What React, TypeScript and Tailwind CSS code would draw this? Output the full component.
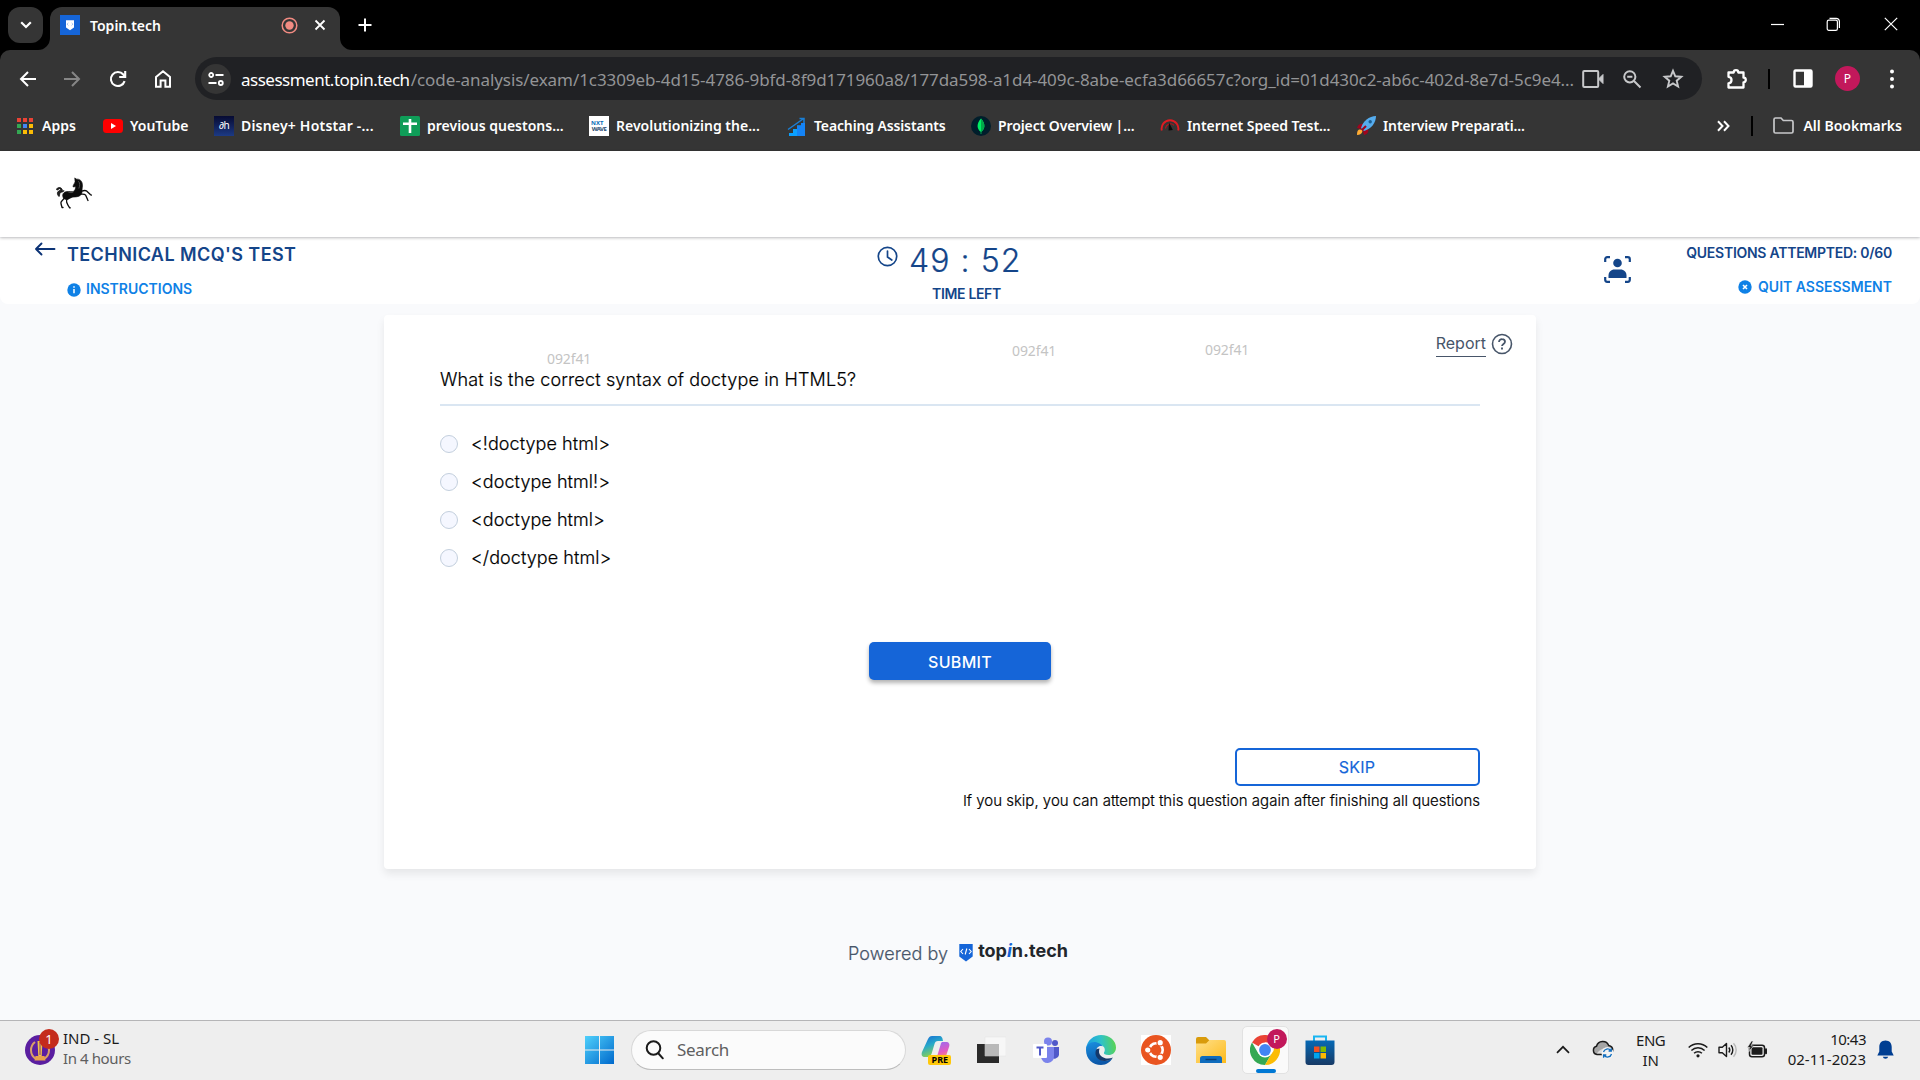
import type { ReactNode } from "react";

/* ---------- Browser chrome ---------- */

function TabStrip() {
  return (
    <div className="flex h-[50px] items-end bg-black">
      <div className="mb-[7px] ml-[8px] flex h-[36px] w-[35px] items-center justify-center rounded-[12px] bg-[#353535]">
        <svg width="12" height="8" viewBox="0 0 12 8" fill="none" stroke="#fff" strokeWidth="2.2">
          <path d="M1.2 1.2 6 6l4.8-4.8" />
        </svg>
      </div>
      <div className="relative ml-[7px] flex h-[43px] w-[290px] items-center rounded-t-[12px] bg-[#353535] pb-[7px] pl-[10px]">
        <svg className="absolute bottom-0 -left-[12px]" width="12" height="12" viewBox="0 0 12 12">
          <path d="M12 0v12H0A12 12 0 0 0 12 0Z" fill="#353535" />
        </svg>
        <svg className="absolute -right-[12px] bottom-0" width="12" height="12" viewBox="0 0 12 12">
          <path d="M0 0v12h12A12 12 0 0 1 0 0Z" fill="#353535" />
        </svg>
        <svg width="20" height="20" viewBox="0 0 20 20">
          <rect width="20" height="20" fill="#1565d8" />
          <path d="M6 5.200h8v7.300l-4 2.700-4-2.700Z" fill="#fff" />
          <path d="m8.300 8-1.200 1.200 1.200 1.200m3.400-2.400 1.200 1.200-1.200 1.200" stroke="#7fa9e8" strokeWidth=".8" fill="none" />
        </svg>
        <span className="ml-[10px] w-[191px] text-[14px] font-semibold whitespace-nowrap text-white">Topin.tech</span>
        <svg width="17" height="17" viewBox="0 0 17 17">
          <circle cx="8.500" cy="8.500" r="7.300" fill="none" stroke="#f28b82" strokeWidth="1.500" />
          <circle cx="8.500" cy="8.500" r="4.200" fill="#f28b82" />
        </svg>
        <svg className="ml-[16px]" width="12" height="12" viewBox="0 0 12 12" stroke="#fff" strokeWidth="1.800">
          <path d="m1.500 1.500 9 9m0-9-9 9" />
        </svg>
      </div>
      <svg className="mb-[18px] ml-[18px]" width="14" height="14" viewBox="0 0 14 14" stroke="#fff" strokeWidth="2">
        <path d="M7 .5v13M.5 7h13" />
      </svg>
      <div className="mb-[16px] ml-auto flex items-center pr-[22px]">
        <svg width="15" height="20" viewBox="0 0 15 20" stroke="#fff" strokeWidth="1.200">
          <path d="M1 10.500h13" />
        </svg>
        <svg className="ml-[41px]" width="15" height="15" viewBox="0 0 15 15" fill="none" stroke="#fff" strokeWidth="1.200">
          <rect x="1.200" y="3.200" width="10.200" height="10.200" rx="1.600" />
          <path d="M3.500 1.300h6.700a3.200 3.200 0 0 1 3.200 3.200v6.600" />
        </svg>
        <svg className="ml-[43px]" width="14" height="14" viewBox="0 0 14 14" stroke="#fff" strokeWidth="1.200">
          <path d="m.8.8 12.400 12.400m0-12.400L.8 13.200" />
        </svg>
      </div>
    </div>
  );
}

function Toolbar() {
  return (
    <div className="bg-black">
      <div className="flex h-[57px] items-center rounded-t-[10px] bg-[#353535]">
        <div className="flex w-[195px] items-center pl-[17px]">
          <svg width="22" height="22" viewBox="0 0 22 22" fill="none" stroke="#fff" strokeWidth="2">
            <path d="M19 11H4.500M11 4l-7 7 7 7" />
          </svg>
          <svg className="ml-[22px]" width="22" height="22" viewBox="0 0 22 22" fill="none" stroke="#868686" strokeWidth="2">
            <path d="M3 11h14.500M11 4l7 7-7 7" />
          </svg>
          <svg className="ml-[24px]" width="22" height="22" viewBox="0 0 22 22" fill="none" stroke="#fff" strokeWidth="2.100">
            <path d="M17.600 13.100A7 7 0 1 1 16.300 6.500l2 2.300" />
            <path d="M18.200 3v6h-6" />
          </svg>
          <svg className="ml-[23px]" width="22" height="22" viewBox="0 0 22 22" fill="none" stroke="#fff" strokeWidth="2">
            <path d="M4 9 11 3.300 18 9v9.800h-4.600v-6.300H8.600v6.300H4Z" />
          </svg>
        </div>
        <div className="flex h-[43px] w-[1507px] items-center rounded-full bg-[#202124] pl-[6px]">
          <div className="flex h-[30px] w-[30px] items-center justify-center rounded-full bg-[#353535]">
            <svg width="16" height="14" viewBox="0 0 16 14" fill="none" stroke="#fff" strokeWidth="1.800">
              <circle cx="3.200" cy="3" r="2" />
              <path d="M7.500 3H15.500M.5 11h8" />
              <circle cx="12.800" cy="11" r="2" />
            </svg>
          </div>
          <div className="mt-[2px] ml-[10px] flex w-[1333px] text-[17px] whitespace-nowrap">
            <span className="w-[170px] tracking-[-0.5px] text-white">assessment.topin.tech</span>
            <span className="tracking-[-0.075px] text-[#939496]">
              /code-analysis/exam/1c3309eb-4d15-4786-9bfd-8f9d171960a8/177da598-a1d4-409c-8abe-ecfa3d66657c?org_id=01d430c2-ab6c-402d-8e7d-5c9e4...
            </span>
          </div>
          <svg className="ml-[8px]" width="22" height="20" viewBox="0 0 22 20" fill="none" stroke="#c7c8ca" strokeWidth="2">
            <rect x="1.200" y="2" width="15" height="16" rx="1" />
            <path d="m16.500 10 4.500-4.500v9Z" fill="#c7c8ca" strokeWidth="1" />
          </svg>
          <svg className="ml-[18px]" width="20" height="20" viewBox="0 0 20 20" fill="none" stroke="#c7c8ca" strokeWidth="2">
            <circle cx="7.800" cy="7.800" r="5.600" />
            <path d="m12 12 6.500 6.500M5.200 7.800h5.200" />
          </svg>
          <svg className="ml-[20px]" width="22" height="22" viewBox="0 0 22 22" fill="none" stroke="#c7c8ca" strokeWidth="1.900">
            <path d="m11 2.800 2.300 5.500 6 .5-4.600 3.900 1.400 5.800L11 15.400l-5.100 3.100 1.400-5.800-4.600-3.900 6-.5Z" />
          </svg>
        </div>
        <svg className="ml-[23px]" width="24" height="24" viewBox="0 0 24 24" fill="none" stroke="#fff" strokeWidth="2.300">
          <path d="M3.500 5.500h5.200a2.300 2.300 0 0 1 4.600 0h5.200v5.200a2.300 2.300 0 0 1 0 4.600v5.200h-15v-4.200c2-.2 3-1.500 3-3.300s-1-3-3-3.200Z" strokeLinejoin="round" />
        </svg>
        <div className="ml-[19px] h-[20px] w-[2px] bg-black" />
        <svg className="ml-[23px]" width="20" height="19" viewBox="0 0 20 19">
          <rect x="1.500" y="1.500" width="17" height="16" rx="1" fill="none" stroke="#fff" strokeWidth="2.400" />
          <path d="M11 1.500h7.500v16H11Z" fill="#fff" />
        </svg>
        <div className="ml-[22px] flex h-[25px] w-[25px] items-center justify-center rounded-full bg-[#c2185b] text-[12px] text-white">P</div>
        <svg className="ml-[29px]" width="6" height="20" viewBox="0 0 6 20" fill="#fff">
          <circle cx="3" cy="2.500" r="2" />
          <circle cx="3" cy="10" r="2" />
          <circle cx="3" cy="17.500" r="2" />
        </svg>
      </div>
    </div>
  );
}

function Bookmark({ width, tracking, icon, label }: { width: string; tracking?: string; icon: ReactNode; label: string }) {
  return (
    <div className={`flex shrink-0 items-center gap-[7px] whitespace-nowrap ${width}`}>
      <div className="flex h-5 w-5 shrink-0 items-center justify-center">{icon}</div>
      <span className={tracking}>{label}</span>
    </div>
  );
}

const APP_DOTS = ["#ea4335", "#ea4335", "#ea4335", "#34a853", "#4285f4", "#fbbc05", "#34a853", "#fbbc05", "#fbbc05"];

function BookmarksBar() {
  return (
    <div className="flex h-[44px] items-center bg-[#353535] pb-[7px] pl-[15px] text-[14px] font-semibold text-white">
      <Bookmark
        width="w-[88px]"
        label="Apps"
        icon={
          <div className="grid grid-cols-3 gap-[2px]">
            {APP_DOTS.map((c, i) => (
              <i key={i} className="h-[4px] w-[4px]" style={{ background: c }} />
            ))}
          </div>
        }
      />
      <Bookmark
        width="w-[111px]"
        label="YouTube"
        icon={
          <svg width="20" height="20" viewBox="0 0 20 20">
            <rect x="0" y="3" width="20" height="14" rx="3.500" fill="#f00" />
            <path d="m8 7 5 3-5 3Z" fill="#fff" />
          </svg>
        }
      />
      <Bookmark
        width="w-[186px]"
        tracking="tracking-[0.2px]"
        label="Disney+ Hotstar -..."
        icon={
          <div className="flex h-5 w-5 items-center justify-center bg-linear-to-b from-[#070b33] to-[#1c3a85] text-[10px] font-normal tracking-[-0.5px]">
            ∂h
          </div>
        }
      />
      <Bookmark
        width="w-[189px]"
        label="previous questons..."
        icon={
          <svg width="20" height="20" viewBox="0 0 20 20">
            <rect width="20" height="20" rx="1.500" fill="#0f9d58" />
            <path d="M10 3v14M3 7.800h14" stroke="#fff" strokeWidth="2.600" />
          </svg>
        }
      />
      <Bookmark
        width="w-[198px]"
        label="Revolutionizing the..."
        icon={
          <div className="flex h-5 w-5 flex-col items-center justify-center bg-white text-[6px] leading-[6px] font-bold">
            <span className="self-start pl-[2px] text-[#0b6fb8]">NXT</span>
            <span className="tracking-[-0.5px] text-[#274b70]">WAVE</span>
          </div>
        }
      />
      <Bookmark
        width="w-[184px]"
        tracking="tracking-[-0.13px]"
        label="Teaching Assistants"
        icon={
          <svg width="20" height="20" viewBox="0 0 20 20">
            <path d="M2 20v-3h4v-4h4V9.500h4V7h4v13Z" fill="#0aa0ff" />
            <path d="M10 20V9.500h4V7h4v13Z" fill="#1483f5" />
            <path d="M1 13.500 16 3M12.500 2.500H17V7" fill="none" stroke="#1a7fd6" strokeWidth="1.500" />
          </svg>
        }
      />
      <Bookmark
        width="w-[189px]"
        tracking="tracking-[-0.1px]"
        label="Project Overview |..."
        icon={
          <svg width="20" height="20" viewBox="0 0 20 20">
            <circle cx="10" cy="10" r="10" fill="#001e2b" />
            <path d="M10 2.500c5 5.500 4 10.500.3 13.300V18h-.6v-2.200C6 13 5 8 10 2.500Z" fill="#00ed64" />
            <path d="M10 2.500c5 5.500 4 10.500.3 13.300H10Z" fill="#00a84a" />
          </svg>
        }
      />
      <Bookmark
        width="w-[196px]"
        tracking="tracking-[-0.08px]"
        label="Internet Speed Test..."
        icon={
          <svg width="20" height="20" viewBox="0 0 20 20" fill="none">
            <path d="M1.800 14.500a8.400 8.400 0 1 1 16.400 0" stroke="#e01b22" strokeWidth="1.900" />
            <path d="M5.500 12.500A5 5 0 0 1 14 9.300" stroke="#b5151b" strokeWidth="1.100" />
            <path d="m8.500 14.500.5-8 3.800 7.500Z" fill="#0a0a0a" />
          </svg>
        }
      />
      <Bookmark
        width="w-[180px]"
        tracking="tracking-[-0.08px]"
        label="Interview Preparati..."
        icon={
          <svg width="20" height="20" viewBox="0 0 20 20">
            <path d="M1 12c1-4 4-5 7-4l-3 5Z" fill="#a0041e" />
            <path d="M8 19c4-1 5-4 4-7l-5 3Z" fill="#a0041e" />
            <path d="M20 0c-7 0-13 5-15 12l3 3C15 13 20 7 20 0Z" fill="#55acee" />
            <path d="m4 16 6-6" stroke="#a0041e" strokeWidth="2.200" />
            <path d="M1 19c0-4 1-5.500 3-5.500s3 1.500 2 3S4 19 1 19Z" fill="#ffac33" />
            <circle cx="14.200" cy="5.800" r="1.700" fill="#1c5f94" />
          </svg>
        }
      />
      <svg className="ml-auto" width="13" height="12" viewBox="0 0 13 12" fill="none" stroke="#fff" strokeWidth="2">
        <path d="m1 1.300 4.500 4.700L1 10.700M7 1.300l4.500 4.700L7 10.700" />
      </svg>
      <div className="ml-[21px] h-[20px] w-[2px] bg-black" />
      <svg className="ml-[20px]" width="21" height="17" viewBox="0 0 21 17" fill="none" stroke="#c7c8ca" strokeWidth="1.700">
        <path d="M1 2.500A1.500 1.500 0 0 1 2.500 1H8l2.300 2.500h8.200A1.500 1.500 0 0 1 20 5v9.500a1.500 1.500 0 0 1-1.500 1.500h-16A1.500 1.500 0 0 1 1 14.500Z" />
      </svg>
      <span className="mr-[18px] ml-[9px] whitespace-nowrap">All Bookmarks</span>
    </div>
  );
}

/* ---------- Assessment page ---------- */

function HorseLogo() {
  return (
    <svg width="38" height="33" viewBox="165 79 114 98" fill="none" stroke="#0c0c0c" strokeLinecap="round" strokeLinejoin="round">
      <path
        d="M225 82l5 3c10-1 16 6 17 15 1 8-1 13-1 18 1 8-2 15-9 18-8 3-14 2-20 3-5 1-9 5-14 7-6 1-12-2-14-7-3-8 1-14 8-16 9-2 19 1 25-2 4-4 5-9 5-14-3 0-4 2-8 1 0-5 4-9 6-14Z"
        fill="#0c0c0c"
        strokeWidth="2"
      />
      <path d="M190 122c-5 3-8 1-10 5-2 5-1 9-3 10-4-4-6-9-4-13 2-5 8-4 9-8 0-4-5-3-8 1-6 2-5-3-2-5 4-3 12-2 14 3 1 3 2 5 6 5" strokeWidth="2.500" fill="#222" />
      <path d="M193 141c-2 6-8 8-10 13-1 6 2 10 3 16h3M203 142c-3 4-5 7-3 12 2 6 5 11 9 17h2" strokeWidth="4" />
      <path d="M242 122c6-2 12-5 17-2l12 11 3 2M240 130c7 0 13-2 17 3l6 14 1 2" strokeWidth="4" />
      <path d="M236 92c4 4 4 12 1 20M206 124c5 2 9 2 13 0" stroke="#777" strokeWidth="1.800" />
    </svg>
  );
}

function ExamHeader() {
  return (
    <div className="flex h-[66px] shrink-0 items-start justify-between rounded-b-[8px] bg-white text-[#144589]">
      <div className="flex w-[500px] pl-[34px]">
        <svg className="mt-[4px]" width="22" height="14" viewBox="0 0 22 14" fill="none" stroke="#0b3275" strokeWidth="1.900" strokeLinecap="round" strokeLinejoin="round">
          <path d="M20.500 7H2M7.500 1.500 2 7l5.500 5.500" />
        </svg>
        <div className="ml-[11px]">
          <h1 className="mt-[5px] text-[18px] leading-[24px] font-semibold tracking-[0.42px]">TECHNICAL MCQ'S TEST</h1>
          <div className="mt-[12px] flex items-center text-[14px] leading-[20px] font-semibold text-[#0f81e6]">
            <svg className="mt-px" width="14" height="14" viewBox="0 0 14 14">
              <circle cx="7" cy="7" r="6.700" fill="#0f81e6" />
              <path d="M7 6v4.300M7 3.200v1.500" stroke="#fff" strokeWidth="1.500" />
            </svg>
            <span className="ml-[5px]">INSTRUCTIONS</span>
          </div>
        </div>
      </div>
      <div className="w-[164px]">
        <div className="flex h-[44px] items-center">
          <svg className="mb-[8px] -ml-px" width="21" height="21" viewBox="0 0 21 21" fill="none" stroke="#144589" strokeWidth="1.700" strokeLinecap="round">
            <circle cx="10.500" cy="10.500" r="9.200" />
            <path d="M10.500 5v6l4.300 3" />
          </svg>
          <span className="mt-[2px] ml-[11px] text-[32px] leading-[44px] font-light tracking-[1.05px] whitespace-nowrap [-webkit-text-stroke:0.2px_#144589]">49 : 52</span>
        </div>
        <div className="pl-[54px] text-[14px] leading-[24px] font-semibold tracking-[-0.33px]">TIME LEFT</div>
      </div>
      <div className="flex w-[500px] justify-end pr-[28px]">
        <svg className="mt-[18px] mr-[55px]" width="27" height="27" viewBox="0 0 27 27">
          <path d="M1.200 6V3.200a2 2 0 0 1 2-2H6m15 0h2.800a2 2 0 0 1 2 2V6m0 15v2.800a2 2 0 0 1-2 2H21m-15 0H3.200a2 2 0 0 1-2-2V21" fill="none" stroke="#144589" strokeWidth="2.200" />
          <circle cx="13.500" cy="7" r="4.300" fill="#144589" />
          <path d="M4.500 22v-2.500c0-3.500 2.500-6 6-6h6c3.500 0 6 2.500 6 6V22Z" fill="#144589" />
        </svg>
        <div className="flex flex-col items-end text-[14px] leading-[20px] font-semibold whitespace-nowrap">
          <span className="mt-[5px] tracking-[-0.26px]">QUESTIONS ATTEMPTED: 0/60</span>
          <span className="mt-[14px] flex items-center text-[#0f81e6]">
            <svg className="mr-[6px]" width="14" height="14" viewBox="0 0 14 14">
              <circle cx="7" cy="7" r="6.700" fill="#0f81e6" />
              <path d="m5 5 4 4m0-4L5 9" stroke="#fff" strokeWidth="1.600" />
            </svg>
            QUIT ASSESSMENT
          </span>
        </div>
      </div>
    </div>
  );
}

const OPTIONS = ["<!doctype html>", "<doctype html!>", "<doctype html>", "</doctype html>"];

function QuestionCard() {
  return (
    <main className="relative mx-auto mt-[11px] h-[554px] w-[1152px] shrink-0 rounded-[4px] bg-white px-[56px] shadow-[0_5px_9px_rgba(0,0,0,0.08)]">
      <span className="absolute top-[34px] left-[163px] font-[Noto_Sans,sans-serif] text-[14px] leading-[20px] tracking-[-0.1px] text-[#c4c4c4]">092f41</span>
      <span className="absolute top-[26px] left-[628px] font-[Noto_Sans,sans-serif] text-[14px] leading-[20px] tracking-[-0.1px] text-[#c4c4c4]">092f41</span>
      <span className="absolute top-[25px] left-[821px] font-[Noto_Sans,sans-serif] text-[14px] leading-[20px] tracking-[-0.1px] text-[#c4c4c4]">092f41</span>
      <div className="-mr-[33px] flex h-[48px] items-start justify-end pt-[16px] text-[#475569]">
        <span className="border-b border-[#475569] pb-px text-[16px] leading-[24px]">Report</span>
        <svg className="mt-[2px] ml-[5px]" width="22" height="22" viewBox="0 0 22 22" fill="none" stroke="#475569" strokeWidth="1.600">
          <circle cx="11" cy="11" r="9.500" />
          <path d="M8 9a3 3 0 0 1 3.100-2.900C12.900 6.100 14 7.200 14 8.700c0 2.100-3 2.300-3 4.300" strokeWidth="1.800" />
          <path d="M11 14.500v1.900" strokeWidth="1.900" />
        </svg>
      </div>
      <h2 className="h-[43px] border-b-2 border-[#dae6f2] pt-[4px] text-[18px] leading-[26px] font-light tracking-[0.155px] text-black [-webkit-text-stroke:0.2px_#000]">
        What is the correct syntax of doctype in HTML5?
      </h2>
      <div className="mt-[19px]">
        {OPTIONS.map((o) => (
          <label key={o} className="flex h-[38px] items-center">
            <span className="h-[18px] w-[18px] rounded-full border border-[#c3cfdd] bg-[#f5f7ff]" />
            <span className="mb-[2px] ml-[13px] text-[18px] font-light tracking-[0.06px] text-black [-webkit-text-stroke:0.2px_#000]">{o}</span>
          </label>
        ))}
      </div>
      <button className="mx-auto mt-[65px] block h-[38px] w-[182px] rounded-[5px] bg-[#1565d8] pt-[2px] text-[16px] font-medium tracking-[0.3px] text-white shadow-[0_3px_4px_rgba(0,0,0,0.3)]">
        SUBMIT
      </button>
      <div className="mt-[68px] flex flex-col items-end">
        <button className="h-[38px] w-[245px] rounded-[5px] border-2 border-[#1565d8] pr-px text-[16px] font-normal tracking-[0.2px] text-[#1565d8] [-webkit-text-stroke:0.15px_#1565d8]">SKIP</button>
        <p className="mt-[4px] text-[15px] leading-[22px] font-light text-black [-webkit-text-stroke:0.2px_#000]">
          If you skip, you can attempt this question again after finishing all questions
        </p>
      </div>
    </main>
  );
}

function PoweredBy() {
  return (
    <div className="mt-[69px] flex items-center pl-[848px]">
      <span className="mt-[3px] text-[18px] leading-[26px] font-light tracking-[0.08px] text-[#475569] [-webkit-text-stroke:0.2px_#475569]">Powered by</span>
      <svg className="ml-[11px]" width="14" height="19" viewBox="0 0 14 19">
        <path d="M.3 1h13.400v12.500L7 18.500.3 13.500Z" fill="#1565d8" />
        <path d="M4 6 1.800 8.500 4 11m6-5 2.200 2.500L10 11M7.800 5.500l-1.600 6" stroke="#fff" fill="none" strokeWidth="1.100" />
      </svg>
      <span className="mb-[3px] ml-[5px] text-[18px] leading-[26px] font-bold text-[#22262b]">
        top<i className="text-[#1565d8]">i</i>n.tech
      </span>
    </div>
  );
}

/* ---------- Windows taskbar ---------- */

function Cell({ children }: { children: ReactNode }) {
  return <div className="flex h-[50px] w-[54.8px] items-center justify-center">{children}</div>;
}

function PinnedApps() {
  return (
    <div className="flex h-full items-center">
      <Cell>
        <div className="relative">
          <svg width="30" height="30" viewBox="0 0 30 30">
            <defs>
              <linearGradient id="cpA" x1="0" y1="0" x2="0.400" y2="1">
                <stop offset="0" stopColor="#1668d6" />
                <stop offset=".5" stopColor="#27a9c9" />
                <stop offset="1" stopColor="#8fd14f" />
              </linearGradient>
              <linearGradient id="cpB" x1="0.300" y1="0" x2="0.600" y2="1">
                <stop offset="0" stopColor="#9a6cf0" />
                <stop offset=".6" stopColor="#e45bc0" />
                <stop offset="1" stopColor="#ff9a5a" />
              </linearGradient>
            </defs>
            <path d="M7 4c1-2 2-3 4-3h7c3 0 3.500 2 4 5h-5c-2 0-3 1-3.500 3l-3 10c-1 2-2 3-4 3H4c-3 0-4-2-3-5Z" fill="url(#cpA)" />
            <path d="M21 7h4c3 0 4 2 3 5l-3 9c-1 2-2 3-5 3h-7c2-1 3-2 3.500-4l3-10c.5-2 .8-2.500 1.500-3Z" fill="url(#cpB)" />
          </svg>
          <span className="absolute right-0 bottom-0 flex h-[10px] w-[23px] items-center justify-center rounded-[2px] bg-[#ffc80a] text-[9px] leading-none font-bold text-black">PRE</span>
        </div>
      </Cell>
      <Cell>
        <svg width="30" height="30" viewBox="0 0 30 30">
          <path d="M1 9h22v19H1Z" fill="#2a2a2a" />
          <path d="M9 2h21v19H9Z" fill="#f7f7f7" stroke="#e0e0e0" strokeWidth=".5" />
          <path d="M9 9h14v12H9Z" fill="#b9b9b9" />
        </svg>
      </Cell>
      <Cell>
        <svg width="28" height="28" viewBox="0 0 28 28">
          <circle cx="23" cy="7" r="3" fill="#5059c9" />
          <path d="M19 11h8v8a4.500 4.500 0 0 1-8 2Z" fill="#5059c9" />
          <circle cx="16" cy="5.500" r="4" fill="#7b83eb" />
          <path d="M9 11h13v9a6.500 6.500 0 0 1-13 1Z" fill="#7b83eb" />
          <rect x="1" y="8" width="14" height="14" rx="1" fill="#fff" />
          <path d="M4.500 11.500h7M8 11.500v8" stroke="#5059c9" strokeWidth="2" />
        </svg>
      </Cell>
      <Cell>
        <svg width="30" height="30" viewBox="0 0 30 30">
          <defs>
            <linearGradient id="edA" x1="0" y1=".3" x2="1" y2=".2">
              <stop offset="0" stopColor="#1b9de2" />
              <stop offset=".5" stopColor="#2fc2c8" />
              <stop offset="1" stopColor="#5ed54a" />
            </linearGradient>
            <linearGradient id="edB" x1="0" y1="0" x2="0.300" y2="1">
              <stop offset="0" stopColor="#1a8fe0" />
              <stop offset="1" stopColor="#0b57a8" />
            </linearGradient>
          </defs>
          <path d="M0 14C1 5 8 0 15 0c9 0 15 6 15 12.500 0 5-3.500 7.500-7.500 7.500-3.500 0-5-1.300-4.500-2.500 1.500-2 1-5.500-2-7C10 7.500 3 9 0 14Z" fill="url(#edA)" />
          <path d="M0 15C0 9 6 6 11 7.500c3 .8 5 2.500 5.500 4-3-1.500-6.500 1-6.500 5.500 0 5 4 9.500 10 8.500 3-.3 5.500-1.300 6.500-2.500C25 26.500 20.500 30 15 30 7 30 0 24 0 15Z" fill="url(#edB)" />
          <path d="M10.500 14c-3 5 .5 12.500 8.500 12 4-.3 6.500-2 8-3.500-4.500 2-9.500 1-12-1.500-2-2-2.500-4.500-1.500-7.500Z" fill="#15396b" />
        </svg>
      </Cell>
      <Cell>
        <div className="bg-white">
          <svg width="30" height="30" viewBox="0 0 30 30">
            <circle cx="15" cy="15" r="15" fill="#e95420" />
            <circle cx="15" cy="15" r="6.700" fill="none" stroke="#fff" strokeWidth="2.600" />
            <circle cx="6.700" cy="15" r="3.200" fill="#fff" stroke="#e95420" strokeWidth="1.200" />
            <circle cx="19.200" cy="7.700" r="3.200" fill="#fff" stroke="#e95420" strokeWidth="1.200" />
            <circle cx="19.200" cy="22.300" r="3.200" fill="#fff" stroke="#e95420" strokeWidth="1.200" />
          </svg>
        </div>
      </Cell>
      <Cell>
        <svg className="ml-px" width="30" height="30" viewBox="0 0 30 30">
          <defs>
            <linearGradient id="fx" x1="0" y1="0" x2="1" y2="1">
              <stop offset="0" stopColor="#ffe08a" />
              <stop offset="1" stopColor="#fdba1a" />
            </linearGradient>
          </defs>
          <path d="M0 4a2 2 0 0 1 2-2h8l4 4v6H0Z" fill="#d99b0b" />
          <path d="M0 8.500h10L13.500 5H28a2 2 0 0 1 2 2v21H0Z" fill="url(#fx)" />
          <path d="M4 28v-4.500A2.500 2.500 0 0 1 6.500 21h17a2.500 2.500 0 0 1 2.500 2.500V28Z" fill="#0f6cbd" />
          <path d="M9.500 24.500h11" stroke="#0a3f75" strokeWidth="1.400" />
        </svg>
      </Cell>
      <Cell>
        <div className="relative -mx-4 flex h-[48px] w-[47px] shrink-0 items-center justify-center rounded-[5px] border border-[#e2e2e2] bg-[#fafafa]">
          <svg width="30" height="30" viewBox="0 0 30 30">
            <path d="M15 15 2 7.500A15 15 0 0 1 28 7.500H15Z" fill="#ea4335" />
            <path d="M2 7.500A15 15 0 0 0 15 30l6.500-11.250L15 15 8.500 18.750Z" fill="#34a853" />
            <path d="M28 7.500A15 15 0 0 1 15 30l6.500-11.250A7.500 7.500 0 0 0 21.500 7.500Z" fill="#fbbc05" />
            <circle cx="15" cy="15" r="7.500" fill="#fff" />
            <circle cx="15" cy="15" r="5.900" fill="#4285f4" />
          </svg>
          <span className="absolute top-[2px] right-[1px] flex h-[20px] w-[20px] items-center justify-center rounded-full bg-[#c2185b] text-[11px] text-white">P</span>
          <span className="absolute bottom-0 left-[13px] h-[4px] w-[20px] rounded-full bg-[#0078d4]" />
        </div>
      </Cell>
      <Cell>
        <svg className="ml-px" width="30" height="30" viewBox="0 0 30 30">
          <defs>
            <linearGradient id="st" x1="0" y1="0" x2="0" y2="1">
              <stop offset="0" stopColor="#0669b5" />
              <stop offset="1" stopColor="#173a66" />
            </linearGradient>
          </defs>
          <path d="M9 6V1.500h12V6" fill="none" stroke="#19b5f1" strokeWidth="2" />
          <path d="M.5 5.500h29V27a3 3 0 0 1-3 3h-23a3 3 0 0 1-3-3Z" fill="url(#st)" />
          <path d="M9 11.500h5.500V17H9Z" fill="#f25022" />
          <path d="M15.500 11.500H21V17h-5.500Z" fill="#7fba00" />
          <path d="M9 18h5.500v5.500H9Z" fill="#00a4ef" />
          <path d="M15.500 18H21v5.500h-5.500Z" fill="#ffb900" />
        </svg>
      </Cell>
    </div>
  );
}

function Taskbar() {
  return (
    <footer className="flex h-[60px] items-center border-t border-[#b5b5b7] bg-[#eeeeee] pb-[2px] font-[Noto_Sans,sans-serif] text-[15px] leading-[20px] text-[#1b1b1b]">
      <div className="flex w-[585px] items-center pl-[25px]">
        <div className="relative">
          <svg width="30" height="30" viewBox="0 0 30 30">
            <circle cx="15" cy="15" r="15" fill="#5a1ea0" />
            <path d="M10 7c-5 4-6 12 1 17M20 7c5 4 6 12-1 17" fill="none" stroke="#d9a066" strokeWidth="2" />
            <path d="M12.500 6h5l-.8 15h-3.400Z" fill="#f0c24b" />
            <path d="M10.500 21h9l1 4.500h-11Z" fill="#e9a24c" />
            <path d="M15 7v13" stroke="#6d2a86" strokeWidth=".9" />
          </svg>
          <span className="absolute -top-[6px] -right-[4px] flex h-[20px] w-[20px] items-center justify-center rounded-full bg-[#c42b1c] text-[13px] text-white">1</span>
        </div>
        <div className="mb-[3px] ml-[8px] whitespace-nowrap">
          <div>IND - SL</div>
          <div className="tracking-[-0.4px] text-[#5f5f5f]">In 4 hours</div>
        </div>
      </div>
      <svg width="29" height="30" viewBox="0 0 29 30">
        <defs>
          <linearGradient id="win" x1="0" y1="0" x2="1" y2="1">
            <stop offset="0" stopColor="#4fd0fb" />
            <stop offset="1" stopColor="#0069cc" />
          </linearGradient>
        </defs>
        <path d="M0 1h14v13.500H0ZM15 1h14v13.500H15ZM0 15.500h14V29H0ZM15 15.500h14V29H15Z" fill="url(#win)" />
      </svg>
      <div className="ml-[17px] flex h-[40px] w-[275px] items-center rounded-full border border-[#d8d8d8] border-b-[#bdbdbd] bg-[#fbfbfb] pl-[13px] text-[17px] text-[#5f5f5f]">
        <svg width="19" height="20" viewBox="0 0 19 20" fill="none" stroke="#1b1b1b" strokeWidth="2" strokeLinecap="round">
          <circle cx="8.500" cy="8" r="6.800" />
          <path d="m13.500 13.500 4.300 4.800" />
        </svg>
        <span className="ml-[13px] tracking-[-0.3px]">Search</span>
      </div>
      <div className="ml-[3px] h-full">
        <PinnedApps />
      </div>
      <div className="ml-auto flex items-center pr-[26px]">
        <svg width="14" height="9" viewBox="0 0 14 9" fill="none" stroke="#1b1b1b" strokeWidth="1.700">
          <path d="M1 7.800 7 1.800l6 6" />
        </svg>
        <svg className="ml-[22px]" width="22" height="19" viewBox="0 0 22 19">
          <path d="M5 14.500a4.200 4.200 0 0 1-.5-8.200 6.500 6.500 0 0 1 12.200-.8c2.500.5 4 2.300 4 4.500s-1.500 4.500-4 4.500Z" fill="#a5a5a5" stroke="#1b1b1b" strokeWidth="1.500" />
          <path d="M5 13.500c2-4 7-6 12-5.500l3 2-1 3Z" fill="#dcdcdc" />
          <circle cx="15.500" cy="13" r="6" fill="#f3f3f3" />
          <path d="M11.500 12a4.200 4.200 0 0 1 7.300-1.500M19.500 14a4.200 4.200 0 0 1-7.300 1.500M19.300 8.300v2.700h-2.700m-5 6.700V15h2.700" fill="none" stroke="#0f6cbd" strokeWidth="1.300" />
        </svg>
        <div className="ml-[21px] w-[32px] text-center">
          <div className="-mx-2 tracking-[-0.5px]">ENG</div>
          <div>IN</div>
        </div>
        <svg className="ml-[21px]" width="20" height="16" viewBox="0 0 20 16" fill="none" stroke="#1b1b1b" strokeWidth="1.500">
          <path d="M.7 5.600a13 13 0 0 1 18.600 0M3.400 8.500a9.300 9.300 0 0 1 13.200 0M6.100 11.300a5.500 5.500 0 0 1 7.800 0" />
          <circle cx="10" cy="13.800" r="1.600" fill="#1b1b1b" stroke="none" />
        </svg>
        <svg className="ml-[10px]" width="20" height="18" viewBox="0 0 20 18" fill="none" stroke="#1b1b1b" strokeWidth="1.400">
          <path d="M1 6.300h3.300L8.500 2.500v13L4.300 11.700H1Z" strokeLinejoin="round" />
          <path d="M10.800 6.500a4 4 0 0 1 0 5M13 4.300a7 7 0 0 1 0 9.400" />
          <path d="M15.500 2.200a10 10 0 0 1 0 13.600" stroke="#b9b9b9" />
        </svg>
        <svg className="ml-[9px]" width="21" height="18" viewBox="0 0 21 18">
          <rect x="2.500" y="4.200" width="15" height="11.600" rx="2.500" fill="none" stroke="#1b1b1b" strokeWidth="1.500" />
          <rect x="4.500" y="6.200" width="11" height="7.600" rx="1" fill="#1b1b1b" />
          <path d="M19 8.300v4" stroke="#1b1b1b" strokeWidth="2" strokeLinecap="round" />
          <path d="M4.500 0 .3 6.500h2.700L1.500 11l5-6H4L6.200 0Z" fill="#1b1b1b" stroke="#eee" strokeWidth=".6" />
        </svg>
        <div className="mb-[2px] ml-[20px] text-right whitespace-nowrap">
          <div className="tracking-[-0.5px]">10:43</div>
          <div>02-11-2023</div>
        </div>
        <svg className="ml-[11px]" width="17" height="20" viewBox="0 0 17 20" fill="#003e92">
          <path d="M8.500.5c4 0 6.200 2.800 6.200 6.500v4.500l2 4H.3l2-4V7C2.300 3.300 4.500.5 8.500.5ZM5.800 16.800h5.400a2.800 2.800 0 0 1-5.400 0Z" />
        </svg>
      </div>
    </footer>
  );
}

export default function App() {
  return (
    <div className="flex h-[1080px] w-[1920px] flex-col overflow-hidden bg-[#f9fafc]">
      <div className="font-[Noto_Sans,sans-serif]">
        <TabStrip />
        <Toolbar />
        <BookmarksBar />
      </div>
      <div className="flex grow flex-col font-[Inter,sans-serif]">
        <header className="relative flex h-[86px] shrink-0 items-center bg-white pb-[2px] pl-[55px] shadow-[0_1px_3px_rgba(0,0,0,0.25)]">
          <HorseLogo />
        </header>
        <div className="h-px shrink-0" />
        <ExamHeader />
        <QuestionCard />
        <PoweredBy />
      </div>
      <Taskbar />
    </div>
  );
}
